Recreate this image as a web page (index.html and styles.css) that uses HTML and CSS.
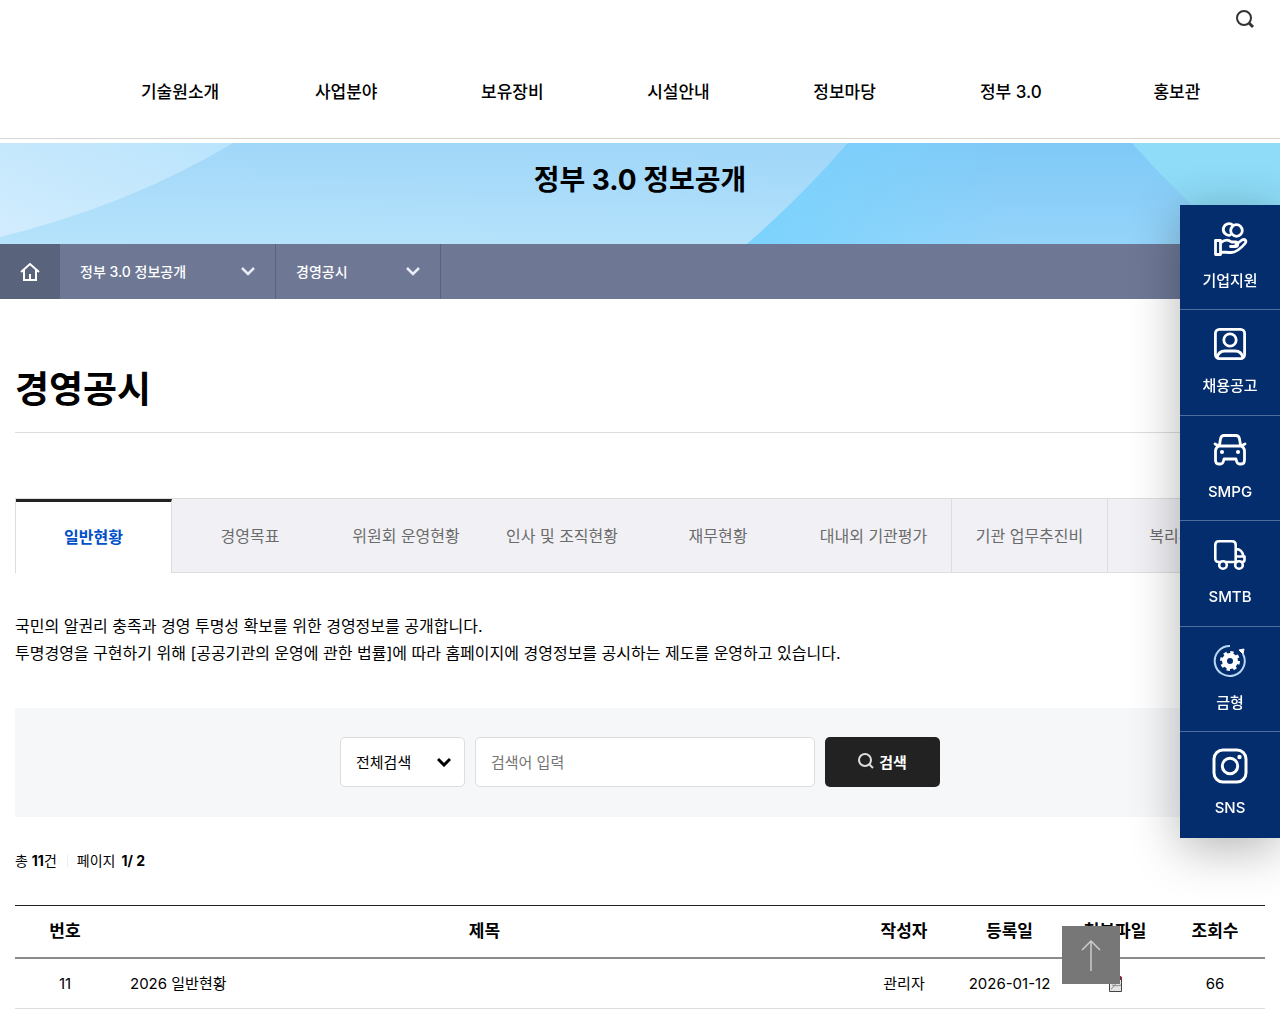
FILE: index.html
```html
<!DOCTYPE html>
<html lang="ko">
<head>
  <meta charset="utf-8">
  <meta name="viewport" content="width=device-width, initial-scale=1.0">
  <title>경영공시 - 정부 3.0 정보공개</title>
  <link rel="stylesheet" href="styles.css">
</head>
<body>

  <header class="header">
    <button type="button" class="header-search" aria-label="검색 열기">
      <svg width="20" height="20" viewBox="0 0 20 20" fill="none" stroke="#333" stroke-width="2"><circle cx="9" cy="9" r="7"/><path d="M14 14l4 4" stroke-width="3"/></svg>
    </button>
    <nav class="gnb">
      <a href="#">기술원소개</a>
      <a href="#">사업분야</a>
      <a href="#">보유장비</a>
      <a href="#">시설안내</a>
      <a href="#">정보마당</a>
      <a href="#">정부 3.0</a>
      <a href="#">홍보관</a>
    </nav>
  </header>

  <section class="visual">
    <svg class="visual-bg" viewBox="0 0 1280 101" preserveAspectRatio="none" aria-hidden="true">
      <defs>
        <linearGradient id="sky" x1="0.2" y1="0" x2="0" y2="1"><stop offset="0" stop-color="#a1d7f9"/><stop offset="1" stop-color="#b6e3fb"/></linearGradient>
        <linearGradient id="left" x1="1" y1="0" x2="0" y2="1"><stop offset="0" stop-color="#b9e4fc"/><stop offset="1" stop-color="#d2ecfe"/></linearGradient>
        <linearGradient id="right" x1="0" y1="0" x2="0" y2="1"><stop offset="0" stop-color="#7fc9f7"/><stop offset="1" stop-color="#95d4fa"/></linearGradient>
        <linearGradient id="shine" x1="0" y1="0" x2="1" y2="0"><stop offset="0" stop-color="#7bd3fd"/><stop offset="1" stop-color="#7bd3fd" stop-opacity="0"/></linearGradient>
      </defs>
      <rect width="1280" height="101" fill="url(#sky)"/>
      <path d="M0 0H233Q130 62 0 94Z" fill="url(#left)"/>
      <path d="M848 0H1280V101H747Q800 55 848 0Z" fill="url(#right)"/>
      <path d="M848 0H1000V101H747Q800 55 848 0Z" fill="url(#shine)"/>
      <path d="M1132 0H1280V101H1236Q1180 55 1132 0Z" fill="#8edcf8"/>
    </svg>
    <h2>정부 3.0 정보공개</h2>
  </section>

  <nav class="lnb">
    <a href="#" class="home" aria-label="홈">
      <svg width="20" height="20" viewBox="0 0 20 20" fill="none" stroke="#fff" stroke-width="2"><path d="M1 10l9-8 9 8M4 8v10h12V8M10 12v6"/></svg>
    </a>
    <button type="button" class="depth depth1">정부 3.0 정보공개
      <svg width="14" height="10" viewBox="0 0 14 10" fill="none" stroke="#e8edf8" stroke-width="2.500"><path d="M1 2l6 6 6-6"/></svg>
    </button>
    <button type="button" class="depth depth2">경영공시
      <svg width="14" height="10" viewBox="0 0 14 10" fill="none" stroke="#e8edf8" stroke-width="2.500"><path d="M1 2l6 6 6-6"/></svg>
    </button>
  </nav>

  <main class="content">
    <h1>경영공시</h1>

    <nav class="tabs">
      <a href="#" class="on">일반현황</a>
      <a href="#">경영목표</a>
      <a href="#">위원회 운영현황</a>
      <a href="#">인사 및 조직현황</a>
      <a href="#">재무현황</a>
      <a href="#" class="line">대내외 기관평가</a>
      <a href="#" class="line">기관 업무추진비</a>
      <a href="#">복리후생비</a>
    </nav>

    <p class="intro">국민의 알권리 충족과 경영 투명성 확보를 위한 경영정보를 공개합니다.<br>
    투명경영을 구현하기 위해 [공공기관의 운영에 관한 법률]에 따라 홈페이지에 경영정보를 공시하는 제도를 운영하고 있습니다.</p>

    <form class="search" onsubmit="return false">
      <select aria-label="검색 구분">
        <option>전체검색</option>
        <option>제목</option>
        <option>내용</option>
      </select>
      <input type="text" placeholder="검색어 입력" aria-label="검색어">
      <button type="submit">
        <svg width="16" height="16" viewBox="0 0 16 16" fill="none" stroke="#ddd" stroke-width="2"><circle cx="7" cy="7" r="6"/><path d="M11 11l4 4"/></svg>
        검색
      </button>
    </form>

    <div class="total">
      <span>총 <b>11</b>건</span>
      <span class="page">페이지 <b>1/ 2</b></span>
    </div>

    <table class="board">
      <thead>
        <tr>
          <th class="c-num">번호</th>
          <th>제목</th>
          <th class="c-writer">작성자</th>
          <th class="c-date">등록일</th>
          <th class="c-file">첨부파일</th>
          <th class="c-hit">조회수</th>
        </tr>
      </thead>
      <tbody>
        <tr>
          <td>11</td>
          <td class="subject"><a href="#">2026 일반현황</a></td>
          <td>관리자</td>
          <td>2026-01-12</td>
          <td>
            <a href="#" aria-label="첨부파일">
              <svg width="16" height="16" viewBox="0 0 16 16"><path d="M2.500 1h12v14.500h-12z" fill="#e4e4e4" stroke="#444"/><path d="M2 0h12v4H2z" fill="#b3142d"/><path d="M4 13c3-2 5-5 5-7M5 9c3 1 6 1 9 0" fill="none" stroke="#888"/></svg>
            </a>
          </td>
          <td>66</td>
        </tr>
      </tbody>
    </table>
  </main>

  <!-- quick menu -->
  <aside class="quick">
    <a href="#">
      <svg width="36" height="36" viewBox="0 0 36 36" fill="none" stroke="#fff" stroke-width="2.800" stroke-linejoin="round" stroke-linecap="round"><circle cx="24.500" cy="9.500" r="5.800"/><path d="M18 14.200a5.800 5.800 0 1 1 3-10"/><path d="M3.500 19.500h5v14h-5zM8.500 22c4-3.500 8-3.500 11-1h4c3 0 3 4.500 0 4.500h-5M24 23.500l6-4.500c3-1.500 5 1 3 3.500-5 6-9 9-14 9-4 0-6-.5-10.500-.5"/></svg>
      <span>기업지원</span>
    </a>
    <a href="#">
      <svg width="36" height="36" viewBox="0 0 36 36" fill="none" stroke="#fff" stroke-width="2.800"><rect x="3.400" y="3.400" width="29.200" height="29.200" rx="4"/><circle cx="18" cy="14" r="6.200"/><path d="M5 32c1-5 4-7 8-7h10c4 0 7 2 8 7"/></svg>
      <span>채용공고</span>
    </a>
    <a href="#">
      <svg width="36" height="36" viewBox="0 0 36 36" fill="none" stroke="#fff" stroke-width="2.800" stroke-linejoin="round" stroke-linecap="round"><path d="M7.500 13l1-6c.4-2.500 1.500-3.500 3.500-3.500h12c2 0 3.100 1 3.500 3.500l1 6M3 12l4 2h22l4-2M7 14c-2.500 1-3.500 3-3.500 5v9c0 2.500 1 4 3 4h2c2 0 2.500-1 3-3l.5-2h12l.5 2c.5 2 1 3 3 3h2c2 0 3-1.500 3-4v-9c0-2-1-4-3.500-5"/><circle cx="10" cy="20" r="1.300" fill="#fff" stroke-width="1.500"/><circle cx="26" cy="20" r="1.300" fill="#fff" stroke-width="1.500"/></svg>
      <span>SMPG</span>
    </a>
    <a href="#">
      <svg width="36" height="36" viewBox="0 0 36 36" fill="none" stroke="#fff" stroke-width="2.600" stroke-linejoin="round"><path d="M7 25c-2.500 0-3.700-1-3.700-3V8c0-2.500 1.200-3.700 3.700-3.700h13c2.500 0 3.700 1.200 3.700 3.700v17zM23.700 12c4.500 0 7 2.500 7.600 7.500M23.700 19.500h8.800V23c0 1.500-1 2-2.500 2h-6"/><circle cx="11" cy="28" r="3.800" fill="#032d6c"/><circle cx="27" cy="28" r="3.800" fill="#032d6c"/></svg>
      <span>SMTB</span>
    </a>
    <a href="#">
      <svg width="36" height="36" viewBox="0 0 36 36" fill="none" stroke="#fff"><path d="M18 3a15 15 0 1 0 13 8" stroke-width="2" stroke="#b9d8f5"/><path d="M27 7l5-1-1 5z" fill="#fff"/><circle cx="18" cy="18" r="5.500" stroke-width="5"/><circle cx="18" cy="18" r="8.500" stroke-width="3" stroke-dasharray="3.300 3.375"/></svg>
      <span>금형</span>
    </a>
    <a href="#">
      <svg width="36" height="36" viewBox="0 0 36 36" fill="none" stroke="#fff" stroke-width="3"><rect x="2" y="2" width="32" height="32" rx="9"/><circle cx="18" cy="18" r="7.700"/><circle cx="27.500" cy="9" r="2.200" fill="#fff" stroke="none"/></svg>
      <span>SNS</span>
    </a>
  </aside>

  <button type="button" class="btn-top" aria-label="맨 위로">
    <svg width="20" height="34" viewBox="0 0 20 34" fill="none" stroke="#ccc" stroke-width="1.500"><path d="M10 32V2M1 11l9-9 9 9"/></svg>
  </button>

<script>
  document.querySelector('.btn-top').addEventListener('click', () => window.scrollTo({ top: 0, behavior: 'smooth' }));
</script>
</body>
</html>
```
FILE: styles.css
```css
:root {
  --navy: #032d6c;
  --point: #0050c8;
  --line: #ddd;
}
*, *::before, *::after { box-sizing: border-box; margin: 0; padding: 0; }
body, button, input, select {
  font-family: Inter, "Noto Sans CJK KR", sans-serif;
  font-size: 16px;
}
body { color: #000; background: #fff; line-height: 27px; }
a { color: inherit; text-decoration: none; }
button { border: 0; background: none; cursor: pointer; }
svg { display: block; }

/* header */
.header {
  height: 139px;
  border-bottom: 1px solid #d6d6ce;
}
.header-search {
  display: block;
  margin-left: auto;
  padding: 9px 25px 10px 10px;
}
.gnb {
  display: grid;
  grid-template-columns: repeat(7, 1fr);
  padding: 40px 20px 0 97px;
  text-align: center;
  font-size: 17px;
  font-weight: 500;
}

/* visual */
.visual {
  position: relative;
  height: 101px;
  margin-top: 4px;
  padding-top: 17px;
  text-align: center;
}
.visual-bg { position: absolute; inset: 0; width: 100%; height: 100%; }
.visual h2 { position: relative; font-size: 28px; line-height: 40px; }

/* location bar */
.lnb {
  display: flex;
  height: 55px;
  background: #6e7895;
  color: #fff;
}
.home {
  display: flex;
  align-items: center;
  justify-content: center;
  width: 60px;
  background: #59637b;
}
.depth {
  display: flex;
  align-items: center;
  justify-content: space-between;
  padding: 0 20px 2px;
  border-right: 1px solid #59637b;
  color: #fff;
  font-size: 14px;
  font-weight: 500;
}
.depth1 { width: 216px; }
.depth2 { width: 165px; }

.content { padding: 61px 15px 15px; }
h1 {
  padding-bottom: 12px;
  border-bottom: 1px solid var(--line);
  font-size: 37px;
  line-height: 60px;
}

/* tabs */
.tabs {
  display: grid;
  grid-template-columns: repeat(8, 1fr);
  height: 75px;
  margin-top: 65px;
  border: 1px solid var(--line);
  background: #f1f1f5;
  color: #6b6b6b;
}
.tabs a {
  display: flex;
  align-items: center;
  justify-content: center;
  padding-top: 2px;
}
.tabs .line { border-right: 1px solid var(--line); }
.tabs .on {
  margin-bottom: -1px;
  padding-bottom: 2px;
  border-top: 3px solid #222;
  border-right: 1px solid var(--line);
  background: #fff;
  color: var(--point);
  font-weight: 700;
}

.intro { margin-top: 40px; }

/* search */
.search {
  display: flex;
  justify-content: center;
  gap: 10px;
  margin-top: 41px;
  padding: 29px 20px 30px;
  background: #f6f7f9;
}
.search select, .search input {
  height: 50px;
  padding: 0 15px;
  border: 1px solid var(--line);
  border-radius: 5px;
  background: #fff;
  color: #000;
  font-size: 15px;
}
.search select {
  width: 125px;
  appearance: none;
  background: #fff url("data:image/svg+xml,%3Csvg xmlns='http://www.w3.org/2000/svg' width='14' height='10' fill='none' stroke='%23000' stroke-width='3'%3E%3Cpath d='M1 2l6 6 6-6'/%3E%3C/svg%3E") no-repeat right 13px center;
}
.search input { width: 340px; }
.search input::placeholder { color: #757575; }
.search button {
  display: flex;
  align-items: center;
  justify-content: center;
  gap: 5px;
  width: 115px;
  height: 50px;
  padding-bottom: 2px;
  border-radius: 5px;
  background: #222;
  color: #fff;
  font-size: 15px;
  font-weight: 700;
}

.total {
  display: flex;
  align-items: center;
  margin-top: 30px;
  font-size: 14px;
}
.page { margin-left: 10px; padding-left: 10px; position: relative; }
.page::before {
  content: "";
  position: absolute;
  left: 0;
  top: 8px;
  height: 12px;
  border-left: 1px solid #eee;
}
.page b { margin-left: 2px; }

/* board */
.board {
  width: 100%;
  margin-top: 31px;
  border-top: 1px solid #222;
  border-collapse: separate;
  border-spacing: 0;
  table-layout: fixed;
  text-align: center;
}
.board th { height: 53px; border-bottom: 2px solid #8b8b8b; font-size: 17px; font-weight: 700; }
.board td { height: 50px; border-bottom: 1px solid var(--line); font-size: 15px; }
.board td svg { margin: 0 auto; }
.board .subject { padding-left: 15px; text-align: left; }
.c-num, .c-writer, .c-file, .c-hit { width: 100px; }
.c-date { width: 111px; }

/* quick menu */
.quick {
  position: fixed;
  top: 20%;
  right: 0;
  z-index: 10;
  display: flex;
  flex-direction: column;
  width: 100px;
  height: 633px;
  background: var(--navy);
  box-shadow: 0 10px 50px rgba(0, 0, 0, .3);
  color: #fff;
  font-size: 15px;
  font-weight: 500;
}
.quick a {
  display: flex;
  flex: 1;
  flex-direction: column;
  align-items: center;
  gap: 10px;
  padding-top: 16px;
  border-bottom: 1px solid #4f6d9c;
}
.quick a:last-child { border-bottom-color: transparent; }

.btn-top {
  position: fixed;
  right: 160px;
  bottom: 40px;
  z-index: 9;
  display: flex;
  justify-content: center;
  width: 58px;
  height: 58px;
  padding-top: 13px;
  background: #777;
}
```
